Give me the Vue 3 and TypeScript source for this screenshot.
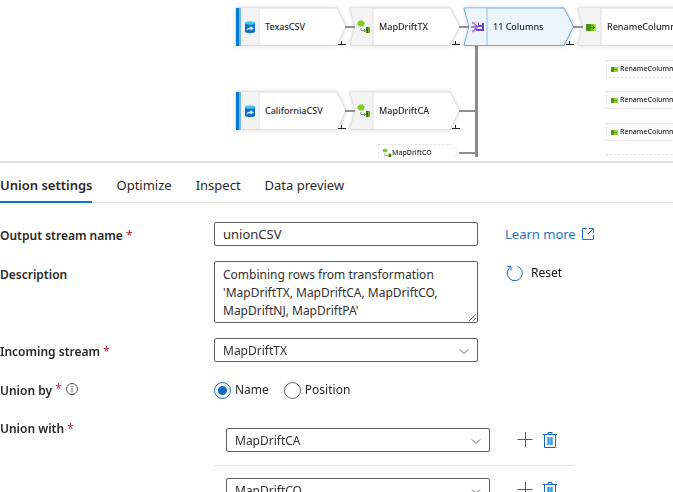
<script setup lang="ts">
import { ref } from 'vue'

type Kind = 'source' | 'derive' | 'union' | 'select'

interface StreamNode {
  id: string
  label: string
  kind: Kind
  x: number
  y: number
  plus: boolean
}

interface Wire {
  x: number
  y: number
  w: number
}

const nodes: StreamNode[] = [
  { id: 'tx', label: 'TexasCSV', kind: 'source', x: 234, y: 6, plus: true },
  { id: 'mtx', label: 'MapDriftTX', kind: 'derive', x: 348, y: 6, plus: true },
  { id: 'union', label: '11 Columns', kind: 'union', x: 462, y: 6, plus: true },
  { id: 'rename', label: 'RenameColumns', kind: 'select', x: 576, y: 6, plus: false },
  { id: 'ca', label: 'CaliforniaCSV', kind: 'source', x: 234, y: 90, plus: true },
  { id: 'mca', label: 'MapDriftCA', kind: 'derive', x: 348, y: 90, plus: true }
]

const miniNodes: StreamNode[] = [
  { id: 'mco', label: 'MapDriftCO', kind: 'derive', x: 378, y: 144, plus: false },
  { id: 'r1', label: 'RenameColumns1', kind: 'select', x: 606, y: 60, plus: false },
  { id: 'r2', label: 'RenameColumns2', kind: 'select', x: 606, y: 91, plus: false },
  { id: 'r3', label: 'RenameColumns3', kind: 'select', x: 606, y: 123, plus: false },
  { id: 'r4', label: '', kind: 'select', x: 606, y: 154, plus: false }
]

const wires: Wire[] = [
  { x: 345, y: 26, w: 10 },
  { x: 459, y: 26, w: 10 },
  { x: 573, y: 26, w: 10 },
  { x: 345, y: 110, w: 10 },
  { x: 459, y: 110, w: 17 },
  { x: 459, y: 152, w: 17 }
]

const tabs = ['Union settings', 'Optimize', 'Inspect', 'Data preview']
const activeTab = ref('Union settings')

const streams = ['MapDriftTX', 'MapDriftCA', 'MapDriftCO', 'MapDriftNJ', 'MapDriftPA']
const outputName = ref('unionCSV')
const description = ref(
  "Combining rows from transformation 'MapDriftTX, MapDriftCA, MapDriftCO, MapDriftNJ, MapDriftPA'"
)
const incoming = ref('MapDriftTX')
const unionBy = ref('name')
const unionWith = ref(['MapDriftCA', 'MapDriftCO'])

function reset() {
  description.value = ''
}
function addStream(index: number) {
  unionWith.value.splice(index + 1, 0, 'MapDriftNJ')
}
function removeStream(index: number) {
  unionWith.value.splice(index, 1)
}
</script>

<template>
  <main class="page">
    <section class="canvas" aria-label="Data flow graph">
      <svg class="trunk" width="4" height="120" aria-hidden="true">
        <rect x="0" y="0" width="3" height="120" fill="#8a8a8a" />
      </svg>
      <div
        v-for="node in nodes"
        :key="node.id"
        class="node"
        :class="node.kind"
        :style="{ left: node.x + 'px', top: node.y + 'px' }"
      >
        <svg class="shape" width="120" height="46" viewBox="0 0 120 46" aria-hidden="true">
          <template v-if="node.kind === 'source'">
            <path class="body" d="M2 2H103L112 20.500L103 39.500H2Z" />
            <path class="side" d="M2 2H25V39H2Z" />
            <path d="M25 2V39" stroke="#e2e2e2" />
            <rect x="2" y="2" width="3" height="38" fill="#0078d4" />
            <rect x="5" y="2" width="2" height="38" fill="#73b7ec" />
          </template>
          <template v-else>
            <path class="body" d="M2 2H102L111.500 20.500L102 39.500H2L7 20.500Z" />
            <path class="side" d="M3 2.500H25V39H3L7.500 20.500Z" />
            <path class="split" d="M25 2V39" />
          </template>
          <path v-if="node.plus" class="plus" d="M104 38.500H112M107.500 35V39" />
        </svg>
        <svg class="glyph" width="16" height="16" viewBox="0 0 16 16" aria-hidden="true">
          <template v-if="node.kind === 'source'">
            <path d="M3 4V13C4 14.500 12 14.500 13 13V4Z" fill="#0b6fc7" />
            <ellipse cx="8" cy="4" rx="5" ry="1.800" fill="#45c8f0" />
            <path d="M4.500 12C4.500 9.500 6 8.500 8.500 8.500V7L12 9.500L8.500 11.500V10.300C6.500 10.200 5.500 10.800 4.500 12Z" fill="#d9efff" />
          </template>
          <template v-else-if="node.kind === 'derive'">
            <path d="M1.500 3.500L3.500 1.500H6.500L9 4L7 7.500H3.500L1.500 5.500Z" fill="#80cb20" />
            <path d="M5 9V11.500H9.500M8 10L9.500 11.500L8 13" fill="none" stroke="#858585" />
            <rect x="10" y="8" width="4" height="6" fill="#6bad1c" />
            <rect x="10" y="8" width="2" height="6" fill="#37770b" />
          </template>
          <template v-else-if="node.kind === 'union'">
            <path d="M2 3.500L5 4.500M2 12.500L5 11.500M1 8H7" fill="none" stroke="#b384eb" stroke-width="2" />
            <path d="M4 4L8 7V9L4 12L5 8Z" fill="#9e68df" />
            <path d="M8 4H9V6H12V4H14V12H6V10H12V8H8Z" fill="#7040bd" />
          </template>
          <template v-else>
            <rect x="2" y="5" width="5" height="7" fill="#4b930e" />
            <rect x="7" y="5" width="5" height="7" fill="#84cc1c" />
            <rect x="10" y="5" width="2" height="7" fill="#a7e72c" />
            <path d="M6 8.500H10.500M8.500 6.500L10.500 8.500L8.500 10.500" fill="none" stroke="#2f7008" />
          </template>
        </svg>
        <span class="node-label">{{ node.label }}</span>
      </div>

      <span
        v-for="(wire, i) in wires"
        :key="i"
        class="wire"
        :style="{ left: wire.x + 'px', top: wire.y + 'px', width: wire.w + 'px' }"
      ></span>

      <div
        v-for="node in miniNodes"
        :key="node.id"
        class="mini"
        :class="node.kind"
        :style="{ left: node.x + 'px', top: node.y + 'px' }"
      >
        <svg class="mini-shape" width="84" height="18" viewBox="0 0 84 18" aria-hidden="true">
          <path d="M.5 .5H73L81 8.500L73 17.500H.5Z" fill="#fff" stroke="#dcdcdc" stroke-dasharray="2 2" />
        </svg>
        <svg v-if="node.kind === 'derive'" class="mini-glyph" width="10" height="10" viewBox="1 1 14 14" aria-hidden="true">
          <path d="M2 3.500L4 2H7L9 4L7.500 7H3.500L2 5.500Z" fill="#80cb20" />
          <path d="M5 9V11.500H9.500" fill="none" stroke="#858585" />
          <rect x="10" y="9" width="4" height="6" fill="#46850c" />
        </svg>
        <svg v-else-if="node.label" class="mini-glyph" width="10" height="10" viewBox="0 0 10 10" aria-hidden="true">
          <rect x="1" y="3" width="3" height="5" fill="#4b930e" />
          <rect x="4" y="3" width="4" height="5" fill="#94d822" />
          <path d="M3 5.500H7" stroke="#4b930e" />
        </svg>
        <span class="mini-label">{{ node.label }}</span>
      </div>
    </section>

    <section class="panel">
      <div class="tabs" role="tablist">
        <button
          v-for="tab in tabs"
          :key="tab"
          type="button"
          role="tab"
          class="tab"
          :class="{ active: tab === activeTab }"
          :aria-selected="tab === activeTab"
          @click="activeTab = tab"
        >{{ tab }}</button>
      </div>

      <form class="form" @submit.prevent>
        <div class="row">
          <label class="name" for="output">Output stream name <b class="req">*</b></label>
          <input id="output" v-model="outputName" class="field" type="text" />
          <a class="learn" href="#learn">
            Learn more
            <svg width="14" height="14" viewBox="0 0 14 14" fill="none" stroke="currentColor" aria-hidden="true">
              <path d="M6 1.500H1.500V12.500H12.500V8M8 1.500H12.500V6M12.500 1.500L7 7" />
            </svg>
          </a>
        </div>

        <div class="row">
          <label class="name" for="description">Description</label>
          <textarea id="description" v-model="description" class="field area"></textarea>
          <button class="reset" type="button" @click="reset">
            <svg width="18" height="18" viewBox="0 0 18 18" fill="none" stroke="#1570c4" aria-hidden="true">
              <path d="M11.500 2.200A7.500 7.500 0 1 1 4 3.500M1.500 2.500H5V6.500" />
            </svg>
            Reset
          </button>
        </div>

        <div class="row">
          <label class="name" for="incoming">Incoming stream <b class="req">*</b></label>
          <span class="picker">
            <select id="incoming" v-model="incoming" class="field">
              <option v-for="s in streams" :key="s">{{ s }}</option>
            </select>
            <svg class="chevron" width="10" height="6" viewBox="0 0 10 6" aria-hidden="true">
              <path d="M1 .5L5 4.500L9 .5" fill="none" stroke="#666" />
            </svg>
          </span>
        </div>

        <div class="row" role="radiogroup" aria-labelledby="union-by">
          <span id="union-by" class="name by">Union by <b class="req">*</b>
            <svg class="info" width="12" height="12" viewBox="0 0 12 12" aria-hidden="true">
              <circle cx="6" cy="6" r="5.500" fill="none" stroke="#555" />
              <path d="M6 5V9M6 3V4" stroke="#666" />
            </svg>
          </span>
          <span class="radios">
            <label class="choice"><input v-model="unionBy" type="radio" name="by" value="name" />Name</label>
            <label class="choice"><input v-model="unionBy" type="radio" name="by" value="position" />Position</label>
          </span>
        </div>

        <div class="row with">
          <span id="union-with" class="name">Union with <b class="req">*</b></span>
          <div class="list">
            <div v-for="(stream, i) in unionWith" :key="i" class="item">
              <span class="picker">
                <select v-model="unionWith[i]" class="field" aria-labelledby="union-with">
                  <option v-for="s in streams" :key="s">{{ s }}</option>
                </select>
                <svg class="chevron" width="10" height="6" viewBox="0 0 10 6" aria-hidden="true">
                  <path d="M1 .5L5 4.500L9 .5" fill="none" stroke="#666" />
                </svg>
              </span>
              <button class="icon" type="button" :aria-label="'Add after ' + stream" @click="addStream(i)">
                <svg width="16" height="16" viewBox="0 0 16 16" aria-hidden="true">
                  <path d="M.5 7.500H15.500M8.500 0V15" stroke="#1068bf" />
                </svg>
              </button>
              <button class="icon" type="button" :aria-label="'Remove ' + stream" @click="removeStream(i)">
                <svg width="14" height="16" viewBox="0 0 14 16" aria-hidden="true">
                  <path d="M4 5H10V13H4Z" fill="#65b9ef" />
                  <path d="M0 2.500H14M5 2V.5H9V2M1.500 3V15.500H12.500V3" fill="none" stroke="#1068bf" />
                  <path d="M5.500 5V13M8.500 5V13" stroke="#3797df" />
                </svg>
              </button>
            </div>
          </div>
        </div>
      </form>
    </section>
  </main>
</template>

<style>
body {
  margin: 0;
  background: #fff;
}
</style>

<style scoped>
.page {
  height: 100vh;
  overflow: hidden;
  font-family: "Noto Sans", sans-serif;
  font-size: 13px;
  line-height: 18px;
  color: #292827;
}
.canvas {
  position: relative;
  height: 157px;
  overflow: hidden;
}
.trunk {
  position: absolute;
  left: 475px;
  top: 46px;
}
.wire {
  position: absolute;
  height: 2px;
  background: #8f8f8f;
}
.node {
  position: absolute;
  width: 120px;
  height: 46px;
}
.shape {
  position: absolute;
  inset: 0;
  overflow: visible;
}
.body {
  fill: #fff;
  stroke: #dedede;
  filter: drop-shadow(0 0 2px rgba(0, 0, 0, 0.16));
}
.side {
  fill: #f3f3f3;
}
.split {
  stroke: #dedede;
}
.union .body {
  fill: #edf5fc;
  stroke: #65a9dc;
}
.union .side {
  fill: #edf5fc;
}
.union .split {
  stroke: #8fc1e8;
}
.select .body {
  d: path("M2 2H122V39.5H2L7 20.5Z");
}
.plus {
  fill: none;
  stroke: #222;
}
.glyph {
  position: absolute;
  left: 8px;
  top: 13px;
}
.node-label {
  position: absolute;
  left: 31px;
  top: 12px;
  font-size: 9px;
  font-weight: 500;
  white-space: nowrap;
}
.mini {
  position: absolute;
  display: flex;
  align-items: center;
  width: 84px;
  height: 17px;
  padding-left: 4px;
  box-sizing: border-box;
}
.mini-shape {
  position: absolute;
  left: 0;
  top: 0;
}
.mini-glyph,
.mini-label {
  position: relative;
  flex: none;
}
.mini-label {
  font-size: 7px;
  font-weight: 500;
  white-space: nowrap;
}
.panel {
  margin-top: 4px;
  border-top: 2px solid #e0e0e0;
}
.tabs {
  display: flex;
  gap: 24px;
  height: 40px;
  box-sizing: border-box;
  border-bottom: 1px solid #e0e0e0;
}
button {
  border: 0;
  background: none;
  padding: 0;
  font: inherit;
  color: inherit;
  white-space: nowrap;
}
.tab {
  height: 40px;
  box-sizing: border-box;
  padding-top: 6px;
  border-bottom: 2px solid transparent;
}
.tab.active {
  font-weight: 600;
  border-bottom-color: #0078d4;
}
.form {
  display: flex;
  flex-direction: column;
  gap: 15px;
  padding-top: 19px;
}
.row {
  display: grid;
  grid-template-columns: 214px 264px auto;
  align-items: start;
}
.name {
  padding-top: 5px;
  font-size: 12px;
  font-weight: 600;
  white-space: nowrap;
}
.req {
  color: #b3263b;
  font-weight: 400;
}
.by .req {
  margin-right: 2px;
  vertical-align: 2px;
  line-height: 1;
}
.field {
  display: block;
  width: 100%;
  height: 24px;
  box-sizing: border-box;
  margin: 0;
  padding: 0 8px;
  border: 1px solid #605e5c;
  border-radius: 2px;
  background: #fff;
  color: #323130;
  font: inherit;
  appearance: none;
  outline: none;
}
.area {
  height: 62px;
  padding: 4px 8px;
  font-size: 12px;
}
.picker {
  position: relative;
  display: block;
  width: 264px;
  font-size: 12px;
}
.picker .field {
  padding-top: 2px;
}
.chevron {
  position: absolute;
  right: 9px;
  top: 11px;
}
.learn {
  display: flex;
  align-items: center;
  gap: 5px;
  padding: 3px 0 0 27px;
  color: #1f73c4;
  text-decoration: none;
}
.reset {
  display: flex;
  align-items: center;
  gap: 7px;
  padding: 3px 0 0 28px;
  color: #111;
  font-size: 12px;
}
.info {
  margin-left: 2px;
  vertical-align: 0;
}
.radios {
  display: flex;
  gap: 15px;
  padding-top: 4px;
  font-size: 12px;
}
.choice {
  display: flex;
  align-items: center;
  gap: 4px;
}
.choice input {
  appearance: none;
  width: 17px;
  height: 17px;
  margin: 0;
  border: 1px solid #605e5c;
  border-radius: 50%;
}
.choice input:checked {
  border-color: #0f6cbd;
  background: radial-gradient(circle, #0f6cbd 4px, #fff 5px);
}
.with {
  grid-template-columns: 214px 360px;
}
.list {
  padding-top: 13px;
}
.item {
  display: flex;
  align-items: flex-start;
  height: 37px;
  margin-bottom: 12px;
  padding-left: 12px;
  border-bottom: 1px solid #e0e0e0;
}
.icon {
  display: flex;
  padding-top: 4px;
}
.item .picker {
  margin-right: 27px;
}
.icon + .icon {
  margin-left: 10px;
}
</style>
